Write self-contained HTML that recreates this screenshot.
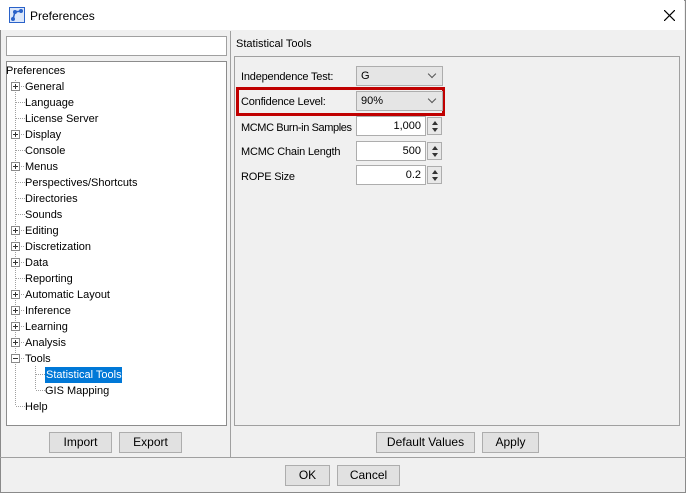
<!DOCTYPE html>
<html><head><style>
*{box-sizing:border-box;margin:0;padding:0}
body{width:686px;height:493px;position:relative;background:#f0f0f0;font-family:"Liberation Sans",Tahoma,sans-serif;font-size:11px;color:#000;overflow:hidden}
.win{position:absolute;left:0;top:0;width:686px;height:493px;border:1px solid #8a8a8a}
.title{position:absolute;left:0;top:0;width:684px;height:30px;background:#fff}
.abs{position:absolute}
.box{position:absolute;background:#fff;border:1px solid #7a7a7a}
.btn{position:absolute;background:#e1e1e1;border:1px solid #adadad;text-align:center;line-height:19px;height:21px;font-size:12px}
.row{position:absolute;left:25px;font-size:11px;height:16px;line-height:16px;white-space:nowrap;margin-top:1px}
.pm{position:absolute;left:11px;width:9px;height:9px;border:1px solid #8a8a8a;background:#fff}
.pm:before{content:"";position:absolute;left:1px;top:3px;width:5px;height:1px;background:#333}
.pm.p:after{content:"";position:absolute;left:3px;top:1px;width:1px;height:5px;background:#333}
.lbl{position:absolute;left:241px;font-size:11px;margin-top:1px;letter-spacing:-0.2px;white-space:nowrap}
.combo{position:absolute;left:356px;width:87px;height:20px;background:#e5e5e5;border:1px solid #adadad;padding-left:4px;line-height:19px}
.combo:after{content:"";position:absolute;right:7px;top:4px;width:5px;height:5px;border-right:1px solid #555;border-bottom:1px solid #555;transform:rotate(45deg)}
.spin{position:absolute;left:356px;width:87px;height:20px}
.spin .f{position:absolute;left:0;top:0;width:70px;height:20px;background:#fff;border:1px solid #adadad;text-align:right;padding-right:4px;line-height:19px}
.spin .s{position:absolute;left:71px;top:1px;width:15px;height:18px;background:#e8e8e8;border:1px solid #adadad}
.spin .s i{position:absolute;left:4px;width:0;height:0;border-left:3px solid transparent;border-right:3px solid transparent}
</style></head><body>
<div class="win"></div>
<div class="title">
<svg class="abs" style="left:9px;top:7px" width="16" height="16"><rect x="0.5" y="0.5" width="15" height="15" fill="#dde8fa" stroke="#2a62c9"/><line x1="4" y1="12" x2="6" y2="5" stroke="#2a62c9" stroke-width="1.5"/><line x1="6" y1="5" x2="12" y2="4" stroke="#2a62c9" stroke-width="1.5"/><circle cx="4" cy="12" r="2" fill="#2a62c9"/><circle cx="6" cy="5" r="2" fill="#2a62c9"/><circle cx="12" cy="4" r="2" fill="#2a62c9"/></svg>
<div class="abs" style="left:30px;top:9px;font-size:12px">Preferences</div>
<svg class="abs" style="left:664px;top:10px" width="11" height="11"><path d="M0 0L11 11M11 0L0 11" stroke="#000" stroke-width="1.2"/></svg>
</div>
<div class="box" style="left:6px;top:36px;width:221px;height:20px;border-color:#a0a0a0"></div>
<div class="box" style="left:6px;top:61px;width:221px;height:365px;border-color:#8c8c8c"></div>
<svg class="abs" style="left:0;top:0" width="230" height="430">
<g stroke="#a0a0a0" stroke-dasharray="1,1" fill="none">
<line x1="15.5" y1="80" x2="15.5" y2="406"/>
<line x1="35.5" y1="366" x2="35.5" y2="390"/>
</g>
<g stroke="#a0a0a0" stroke-dasharray="1,1">
<line x1="16" y1="102.5" x2="25" y2="102.5"/><line x1="16" y1="118.5" x2="25" y2="118.5"/><line x1="16" y1="150.5" x2="25" y2="150.5"/><line x1="16" y1="182.5" x2="25" y2="182.5"/><line x1="16" y1="198.5" x2="25" y2="198.5"/><line x1="16" y1="214.5" x2="25" y2="214.5"/><line x1="16" y1="278.5" x2="25" y2="278.5"/><line x1="16" y1="406.5" x2="25" y2="406.5"/>
<line x1="21" y1="86.5" x2="25" y2="86.5"/><line x1="21" y1="134.5" x2="25" y2="134.5"/><line x1="21" y1="166.5" x2="25" y2="166.5"/><line x1="21" y1="230.5" x2="25" y2="230.5"/><line x1="21" y1="246.5" x2="25" y2="246.5"/><line x1="21" y1="262.5" x2="25" y2="262.5"/><line x1="21" y1="294.5" x2="25" y2="294.5"/><line x1="21" y1="310.5" x2="25" y2="310.5"/><line x1="21" y1="326.5" x2="25" y2="326.5"/><line x1="21" y1="342.5" x2="25" y2="342.5"/><line x1="21" y1="358.5" x2="25" y2="358.5"/>
<line x1="36" y1="374.5" x2="45" y2="374.5"/><line x1="36" y1="390.5" x2="45" y2="390.5"/>
</g></svg>
<div class="row" style="left:6px;top:62px">Preferences</div>
<div class="pm p" style="top:82px"></div><div class="row" style="top:78px">General</div>
<div class="row" style="top:94px">Language</div>
<div class="row" style="top:110px">License Server</div>
<div class="pm p" style="top:130px"></div><div class="row" style="top:126px">Display</div>
<div class="row" style="top:142px">Console</div>
<div class="pm p" style="top:162px"></div><div class="row" style="top:158px">Menus</div>
<div class="row" style="top:174px">Perspectives/Shortcuts</div>
<div class="row" style="top:190px">Directories</div>
<div class="row" style="top:206px">Sounds</div>
<div class="pm p" style="top:226px"></div><div class="row" style="top:222px">Editing</div>
<div class="pm p" style="top:242px"></div><div class="row" style="top:238px">Discretization</div>
<div class="pm p" style="top:258px"></div><div class="row" style="top:254px">Data</div>
<div class="row" style="top:270px">Reporting</div>
<div class="pm p" style="top:290px"></div><div class="row" style="top:286px">Automatic Layout</div>
<div class="pm p" style="top:306px"></div><div class="row" style="top:302px">Inference</div>
<div class="pm p" style="top:322px"></div><div class="row" style="top:318px">Learning</div>
<div class="pm p" style="top:338px"></div><div class="row" style="top:334px">Analysis</div>
<div class="pm" style="top:354px"></div><div class="row" style="top:350px">Tools</div>
<div class="row" style="left:45px;top:366px;background:#0078d7;color:#fff;padding:0 1px;width:77px">Statistical Tools</div>
<div class="row" style="left:45px;top:382px">GIS Mapping</div>
<div class="row" style="top:398px">Help</div>
<div class="btn" style="left:49px;top:432px;width:63px">Import</div>
<div class="btn" style="left:119px;top:432px;width:63px">Export</div>
<div class="abs" style="left:230px;top:31px;width:1px;height:427px;background:#a0a0a0"></div>
<div class="abs" style="left:0;top:457px;width:686px;height:1px;background:#a0a0a0"></div>
<div class="abs" style="left:236px;top:38px;font-size:11px">Statistical Tools</div>
<div class="abs" style="left:234px;top:56px;width:446px;height:370px;border:1px solid #a0a0a0"></div>
<div class="lbl" style="top:70px">Independence Test:</div>
<div class="combo" style="top:66px">G</div>
<div class="abs" style="left:236px;top:87px;width:209px;height:29px;border:3px solid #c00000"></div>
<div class="lbl" style="top:95px">Confidence Level:</div>
<div class="combo" style="top:91px">90%</div>
<div class="lbl" style="top:121px;letter-spacing:-0.4px">MCMC Burn-in Samples</div>
<div class="spin" style="top:116px"><div class="f">1,000</div><div class="s"><i style="top:3px;border-bottom:4px solid #333"></i><i style="top:10px;border-top:4px solid #333"></i></div></div>
<div class="lbl" style="top:145px">MCMC Chain Length</div>
<div class="spin" style="top:141px"><div class="f">500</div><div class="s"><i style="top:3px;border-bottom:4px solid #333"></i><i style="top:10px;border-top:4px solid #333"></i></div></div>
<div class="lbl" style="top:170px">ROPE Size</div>
<div class="spin" style="top:165px"><div class="f">0.2</div><div class="s"><i style="top:3px;border-bottom:4px solid #333"></i><i style="top:10px;border-top:4px solid #333"></i></div></div>
<div class="btn" style="left:376px;top:432px;width:99px">Default Values</div>
<div class="btn" style="left:482px;top:432px;width:57px">Apply</div>
<div class="btn" style="left:285px;top:465px;width:45px">OK</div>
<div class="btn" style="left:337px;top:465px;width:63px">Cancel</div>
</body></html>
